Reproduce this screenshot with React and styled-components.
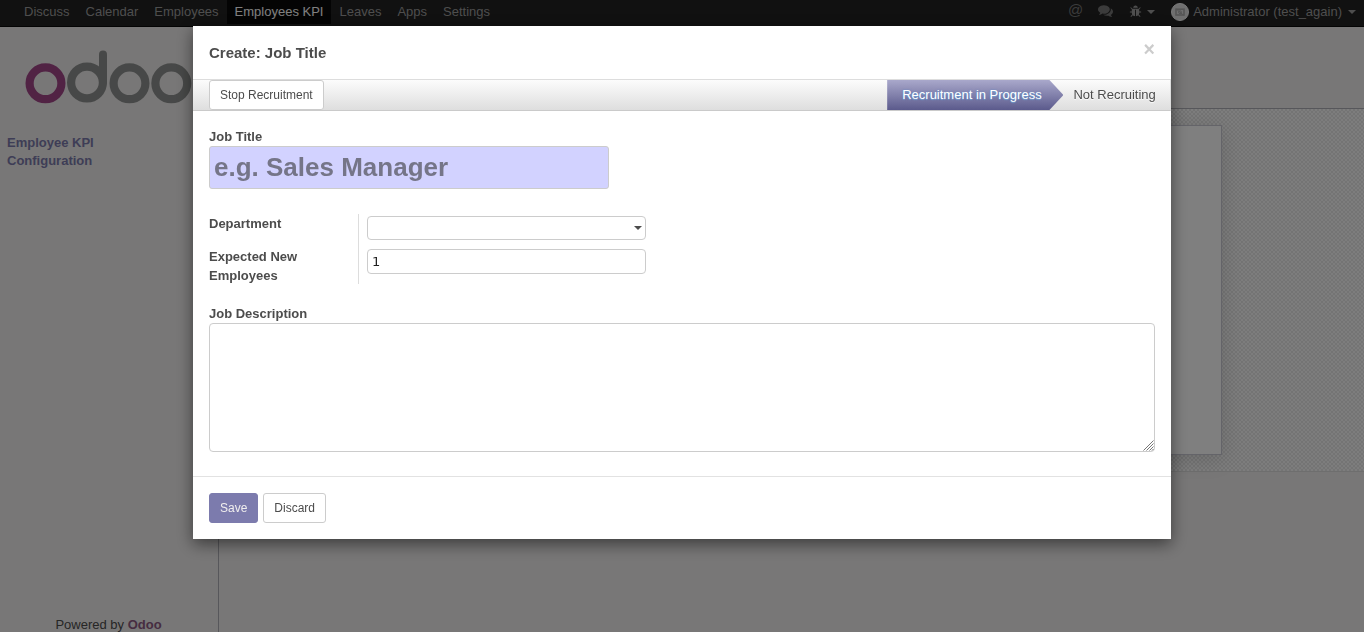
import React from "react";
import styled, { createGlobalStyle } from "styled-components";

const GlobalStyle = createGlobalStyle`
  *, *::before, *::after { box-sizing: border-box; }
  body {
    margin: 0;
    overflow: hidden;
    font: 13px/18px "Liberation Sans", Arial, sans-serif;
    color: #4c4c4c;
    background: #eee;
  }
  input, textarea, button { font-family: inherit; margin: 0; }
`;

const Page = styled.div`
  height: 632px;
  display: flex;
  flex-direction: column;
  overflow: hidden;
`;

const Navbar = styled.nav`
  flex: none;
  height: 27px;
  padding: 0 8px 0 16px;
  display: flex;
  justify-content: space-between;
  background: #222;
  border-bottom: 1px solid #080808;
`;

const NavGroup = styled.div`
  display: flex;
  align-items: flex-start;
`;

const NavLink = styled.a`
  height: 24px;
  padding: 0 8px;
  line-height: 24px;
  color: ${(p) => (p.$active ? "#fff" : "#9d9d9d")};
  background: ${(p) => (p.$active ? "#080808" : "transparent")};
`;

const NavItem = styled.span`
  height: 23px;
  margin-left: ${(p) => p.$gap || 0}px;
  display: flex;
  align-items: center;
  color: ${(p) => p.$color || "#9d9d9d"};
`;

const Glyph = styled.svg`
  display: block;
  fill: currentColor;
  margin-bottom: ${(p) => p.$lift || 0}px;
`;

const Mention = styled.span`
  margin-bottom: 4px;
  font-size: 15px;
  line-height: 20px;
  color: #777;
`;

const Caret = styled.span`
  margin-left: ${(p) => p.$gap || 0}px;
  border: 4px solid transparent;
  border-top-color: currentColor;
  border-bottom: 0;
`;

const Avatar = styled.span`
  width: 18px;
  height: 18px;
  margin: 1px 4px 0 0;
  display: flex;
  align-items: center;
  justify-content: center;
  border-radius: 50%;
  border: 1px solid #f4f4f4;
  background: #dedede;
`;

const Columns = styled.div`
  flex: 1;
  min-height: 0;
  display: flex;
`;

const Sidebar = styled.aside`
  width: 219px;
  display: flex;
  flex-direction: column;
  border-right: 1px solid #afafb6;
  background: #f0eeee;
`;

const Logo = styled.svg`
  display: block;
  flex: none;
  margin: 20px 0 0 20px;
`;

const MenuHeading = styled.a`
  padding-left: 7px;
  font-weight: bold;
  color: #7c7bad;
  &:first-of-type { margin-top: 27px; }
`;

const PoweredBy = styled.footer`
  margin-top: auto;
  height: 16px;
  padding-right: 1px;
  text-align: center;
  color: #4c4c4c;
  b { color: #8d5a82; }
`;

const Main = styled.main`
  flex: 1;
  display: flex;
  flex-direction: column;
  background: #f0eeee;
`;

const ControlPanel = styled.div`
  height: 82px;
  border-bottom: 1px solid #afafb6;
`;

const SheetArea = styled.div`
  height: 363px;
  padding: 16px 142px 16px 16px;
  border-bottom: 1px solid #ddd;
  background: repeating-conic-gradient(#e8e8e8 0 25%, #fbfbfb 0 50%) 0 0 / 4px 4px;
`;

const Sheet = styled.div`
  height: 330px;
  background: #fff;
  border: 1px solid #c8c8d3;
  box-shadow: 0 4px 20px rgba(0, 0, 0, 0.15);
`;

const Backdrop = styled.div`
  position: fixed;
  inset: 0;
  background: rgba(0, 0, 0, 0.5);
`;

const Dialog = styled.section`
  position: fixed;
  left: 193px;
  top: 26px;
  width: 978px;
  height: 513px;
  display: flex;
  flex-direction: column;
  background: #fff;
  box-shadow: 0 5px 15px rgba(0, 0, 0, 0.5);
`;

const DialogHeader = styled.header`
  height: 53px;
  padding: 0 16px;
  display: flex;
  align-items: center;
  justify-content: space-between;
`;

const Title = styled.h3`
  margin: 0 0 1px;
  font-size: 15px;
  line-height: 21px;
`;

const Close = styled.button`
  padding: 0;
  margin-bottom: 8px;
  border: 0;
  background: none;
  font-size: 19.5px;
  line-height: 20px;
  font-weight: bold;
  color: #ccc;
`;

const StatusBar = styled.div`
  flex: none;
  height: 32px;
  padding-left: 16px;
  display: flex;
  justify-content: space-between;
  border: 1px solid #ddd;
  border-left: 0;
  border-bottom-color: #cacaca;
  background: linear-gradient(#fcfcfc, #dedede);
`;

const Button = styled.button`
  height: 30px;
  padding: 0 10px;
  border: 1px solid ${(p) => (p.$primary ? "#7c7bad" : "#ccc")};
  border-radius: 3px;
  font-size: 12px;
  line-height: 18px;
  color: ${(p) => (p.$primary ? "#f0eeee" : "#4c4c4c")};
  background: ${(p) => (p.$primary ? "#7c7bad" : "#fff")};
`;

const Stages = styled.div`
  display: flex;
  height: 30px;
  line-height: 29px;
`;

const Stage = styled.span`
  padding: ${(p) => (p.$active ? "0 21.8px 0 15px" : "0 14.2px 0 10px")};
  color: ${(p) => (p.$active ? "#fff" : "#4c4c4c")};
  text-shadow: ${(p) => (p.$active ? "0 1px 1px #729fcf, 0 0 2px rgba(67, 134, 214, 0.6)" : "0 1px 1px #fff")};
  background: ${(p) => (p.$active ? "linear-gradient(#a9a8cb, #5b5a8c)" : "none")};
  clip-path: ${(p) => (p.$active ? "polygon(0 0, calc(100% - 14px) 0, 100% 50%, calc(100% - 14px) 100%, 0 100%)" : "none")};
`;

const Form = styled.form`
  flex: 1;
  padding: 16px 16px 0;
  display: flex;
  flex-direction: column;
`;

const Label = styled.label`
  display: block;
  font-weight: bold;
  line-height: 19px;
`;

const TextInput = styled.input`
  display: block;
  width: ${(p) => (p.$large ? "400px" : "279px")};
  height: ${(p) => (p.$large ? "43px" : "25px")};
  padding: 0 4px;
  border: 1px solid #ccc;
  border-radius: ${(p) => (p.$large ? "3px" : "4px")};
  outline: 0;
  font-family: ${(p) => (p.$large ? "inherit" : '"DejaVu Sans", sans-serif')};
  font-size: ${(p) => (p.$large ? "26px" : "13px")};
  font-weight: ${(p) => (p.$large ? "bold" : "normal")};
  color: #1f1f1f;
  background: ${(p) => (p.$large ? "#d2d2ff" : "#fff")};
  &::placeholder { color: #757588; }
`;

const Group = styled.div`
  width: 437px;
  height: 70px;
  margin: 25px 0 20px;
  display: flex;
`;

const LabelColumn = styled.div`
  width: 150px;
  padding-right: 40px;
  border-right: 1px solid #ddd;
  ${Label}:last-child { margin-top: 14px; }
`;

const FieldColumn = styled.div`
  padding: 2px 0 0 8px;
  display: flex;
  flex-direction: column;
  gap: 9px;
`;

const Select = styled.div`
  width: 279px;
  height: 24px;
  padding-right: 3px;
  display: flex;
  align-items: center;
  justify-content: flex-end;
  border: 1px solid #ccc;
  border-radius: 4px;
`;

const TextAreaBox = styled.div`
  position: relative;
  width: 946px;
  height: 129px;
`;

const TextArea = styled.textarea`
  display: block;
  width: 100%;
  height: 100%;
  resize: none;
  border: 1px solid #ccc;
  border-radius: 4px;
  background: #fff;
`;

const Grip = styled.svg`
  position: absolute;
  right: 1px;
  bottom: 1px;
  stroke: #777;
`;

const DialogFooter = styled.footer`
  height: 63px;
  padding: 16px;
  display: flex;
  gap: 5px;
  border-top: 1px solid #e2e2e2;
`;

const menus = ["Discuss", "Calendar", "Employees", "Employees KPI", "Leaves", "Apps", "Settings"];

const CommentsIcon = () => (
  <Glyph $lift={2} width="15" height="15" viewBox="0 0 1792 1792">
    <path d="M1408 768q0 139-94 257t-256.5 186.5-353.5 68.5q-86 0-176-16-124 88-278 128-36 9-86 16h-3q-11 0-20.5-8t-11.5-21q-1-3-1-6.5t.5-6.5 2-6l2.5-5 3.5-5.5 4-5 4.5-5 4-4.5q5-6 23-25t26-29.5 22.5-29 25-38.5 20.5-44q-124-72-195-177t-71-224q0-139 94-257t256.5-186.5 353.5-68.5 353.5 68.5 256.5 186.5 94 257zm384 256q0 120-71 224.5t-195 176.5q10 24 20.5 44t25 38.5 22.5 29 26 29.5 23 25q1 1 4 4.5t4.5 5 4 5 3.5 5.5l2.5 5 2 6 .5 6.5-1 6.5q-3 14-13 22t-22 7q-50-7-86-16-154-40-278-128-90 16-176 16-271 0-472-132 58 4 88 4 161 0 309-45t264-129q125-92 192-212t67-254q0-77-23-152 129 71 204 178t75 230z" />
  </Glyph>
);

const BugIcon = () => (
  <Glyph width="13" height="13" viewBox="0 0 1792 1792">
    <path d="M1696 960q0 26-19 45t-45 19h-224q0 171-67 290l208 209q19 19 19 45t-19 45q-18 19-45 19t-45-19l-198-197q-5 5-15 13t-42 28.5-65 36.5-82 29-97 13v-896h-128v896q-51 0-101.5-13.5t-87-33-66-39-43.5-32.5l-15-14-183 207q-20 21-48 21-24 0-43-16-19-18-20.5-44.5t15.5-46.5l202-227q-58-114-58-274h-224q-26 0-45-19t-19-45 19-45 45-19h224v-294l-173-173q-19-19-19-45t19-45 45-19 45 19l173 173h844l173-173q19-19 45-19t45 19 19 45-19 45l-173 173v294h224q26 0 45 19t19 45zm-480-576h-640q0-133 93.5-226.5t226.5-93.5 226.5 93.5 93.5 226.5z" />
  </Glyph>
);

export default function App() {
  return (
    <>
      <GlobalStyle />
      <Page>
        <Navbar>
          <NavGroup>
            {menus.map((name) => (
              <NavLink key={name} $active={name === "Employees KPI"}>{name}</NavLink>
            ))}
          </NavGroup>
          <NavGroup>
            <NavItem><Mention>@</Mention></NavItem>
            <NavItem $gap={15} $color="#777"><CommentsIcon /></NavItem>
            <NavItem $gap={16}><BugIcon /><Caret $gap={5} /></NavItem>
            <NavItem $gap={16}>
              <Avatar>
                <svg width="10" height="8" viewBox="0 0 10 8" fill="none" stroke="#aaa">
                  <rect x="1" y="1.2" width="8" height="5.8" strokeWidth="1.6" />
                  <circle cx="5" cy="4.2" r="1.4" />
                  <path d="M1.5 1.2l7 6" />
                </svg>
              </Avatar>
              Administrator (test_again)
              <Caret $gap={6} />
            </NavItem>
          </NavGroup>
        </Navbar>
        <Columns>
          <Sidebar>
            <Logo width="180" height="60" viewBox="0 0 180 60" fill="none" strokeWidth="8.2">
              <circle cx="25.5" cy="36.3" r="15.9" stroke="#a24689" />
              <g stroke="#8f9190">
                <circle cx="67" cy="35.5" r="15.9" />
                <circle cx="109.5" cy="36.3" r="15.9" />
                <circle cx="151.3" cy="36.3" r="15.9" />
                <path d="M83 7.5V35" strokeLinecap="round" strokeWidth="8" />
              </g>
            </Logo>
            <MenuHeading>Employee KPI</MenuHeading>
            <MenuHeading>Configuration</MenuHeading>
            <PoweredBy>Powered by <b>Odoo</b></PoweredBy>
          </Sidebar>
          <Main>
            <ControlPanel />
            <SheetArea><Sheet /></SheetArea>
          </Main>
        </Columns>
      </Page>
      <Backdrop />
      <Dialog>
        <DialogHeader>
          <Title>Create: Job Title</Title>
          <Close>×</Close>
        </DialogHeader>
        <StatusBar>
          <Button>Stop Recruitment</Button>
          <Stages>
            <Stage $active>Recruitment in Progress</Stage>
            <Stage>Not Recruiting</Stage>
          </Stages>
        </StatusBar>
        <Form>
          <Label>Job Title</Label>
          <TextInput $large placeholder="e.g. Sales Manager" />
          <Group>
            <LabelColumn>
              <Label>Department</Label>
              <Label>Expected New Employees</Label>
            </LabelColumn>
            <FieldColumn>
              <Select><Caret /></Select>
              <TextInput defaultValue="1" />
            </FieldColumn>
          </Group>
          <Label>Job Description</Label>
          <TextAreaBox>
            <TextArea />
            <Grip width="11" height="11" viewBox="0 0 11 11">
              <path d="M0.5 10.5l10-10M3.5 10.5l7-7M6.5 10.5l4-4M9 10.5l1.5-1.5" />
            </Grip>
          </TextAreaBox>
        </Form>
        <DialogFooter>
          <Button $primary>Save</Button>
          <Button>Discard</Button>
        </DialogFooter>
      </Dialog>
    </>
  );
}
